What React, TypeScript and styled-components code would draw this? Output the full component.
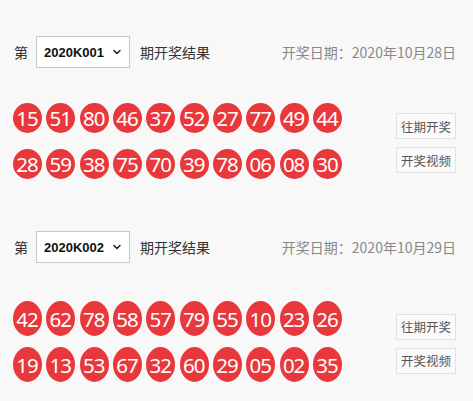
import styled, { createGlobalStyle } from 'styled-components';
import { ChevronDown } from 'lucide-react';

const GlobalStyle = createGlobalStyle`
  html, body {
    margin: 0;
    padding: 0;
    background: #f8f8f8;
  }
  body {
    font-family: "Noto Sans CJK SC", "Noto Sans", sans-serif;
  }
`;

const draws = [
  {
    period: '2020K001',
    options: ['2020K001', '2020K002'],
    date: '2020年10月28日',
    ballHeight: 30,
    headerGap: 35,
    rows: [
      ['15', '51', '80', '46', '37', '52', '27', '77', '49', '44'],
      ['28', '59', '38', '75', '70', '39', '78', '06', '08', '30'],
    ],
  },
  {
    period: '2020K002',
    options: ['2020K001', '2020K002'],
    date: '2020年10月29日',
    ballHeight: 35,
    headerGap: 38,
    rows: [
      ['42', '62', '78', '58', '57', '79', '55', '10', '23', '26'],
      ['19', '13', '53', '67', '32', '60', '29', '05', '02', '35'],
    ],
  },
];

const Page = styled.div`
  padding: 36px 17px 20px 14px;
  display: flex;
  flex-direction: column;
  gap: 52px;
`;

const Section = styled.section`
  display: flex;
  flex-direction: column;
`;

const Header = styled.div`
  display: flex;
  align-items: center;
  justify-content: space-between;
  height: 32px;
`;

const PeriodPicker = styled.div`
  display: flex;
  align-items: center;
  gap: 10px;
  font-size: 14px;
  color: #333;
`;

const SelectWrap = styled.div`
  position: relative;
  margin-left: -2px;

  svg {
    position: absolute;
    right: 7px;
    top: 50%;
    transform: translateY(-50%);
    pointer-events: none;
    color: #222;
  }
`;

const Select = styled.select`
  appearance: none;
  width: 94px;
  height: 32px;
  padding: 0 0 0 7px;
  border: 1px solid #c8c8c8;
  border-radius: 0;
  background: #fff;
  font-family: "Liberation Sans", Arial, sans-serif;
  font-weight: bold;
  font-size: 13px;
  color: #111;
  outline: none;
`;

const DrawDate = styled.span`
  font-size: 14px;
  color: #888;
`;

const Body = styled.div<{ $top: number }>`
  display: flex;
  align-items: center;
  justify-content: space-between;
  margin-top: ${p => p.$top}px;
`;

const BallGrid = styled.div<{ $ballHeight: number }>`
  display: grid;
  grid-template-columns: repeat(10, 29px);
  column-gap: 4.33px;
  row-gap: ${p => 46 - p.$ballHeight}px;
  margin-left: -1px;
`;

const Ball = styled.span<{ $h: number }>`
  width: 29px;
  height: ${p => p.$h}px;
  border-radius: 50%;
  background: #e8383b;
  color: #fff;
  font-family: "Noto Sans", "Open Sans", sans-serif;
  font-size: 20.5px;
  letter-spacing: -1px;
  display: flex;
  align-items: center;
  justify-content: center;
  text-indent: -1px;
`;

const Actions = styled.div`
  display: flex;
  flex-direction: column;
  gap: 8px;
  margin-top: 4px;
`;

const ActionButton = styled.button`
  width: 60px;
  height: 26px;
  padding: 0;
  border: 1px solid #e2e2e2;
  background: #fbfbfb;
  color: #555;
  font-family: "Noto Sans CJK SC", sans-serif;
  font-size: 12.5px;
  cursor: pointer;
`;

const App = () => (
  <>
    <GlobalStyle />
    <Page>
      {draws.map(draw => (
        <Section key={draw.period}>
          <Header>
            <PeriodPicker>
              <span>第</span>
              <SelectWrap>
                <Select defaultValue={draw.period}>
                  {draw.options.map(o => (
                    <option key={o} value={o}>{o}</option>
                  ))}
                </Select>
                <ChevronDown size={12} strokeWidth={3} />
              </SelectWrap>
              <span>期开奖结果</span>
            </PeriodPicker>
            <DrawDate>开奖日期：{draw.date}</DrawDate>
          </Header>
          <Body $top={draw.headerGap}>
            <BallGrid $ballHeight={draw.ballHeight}>
              {draw.rows.flat().map((n, i) => (
                <Ball key={i} $h={draw.ballHeight}>{n}</Ball>
              ))}
            </BallGrid>
            <Actions>
              <ActionButton>往期开奖</ActionButton>
              <ActionButton>开奖视频</ActionButton>
            </Actions>
          </Body>
        </Section>
      ))}
    </Page>
  </>
);

export default App;
